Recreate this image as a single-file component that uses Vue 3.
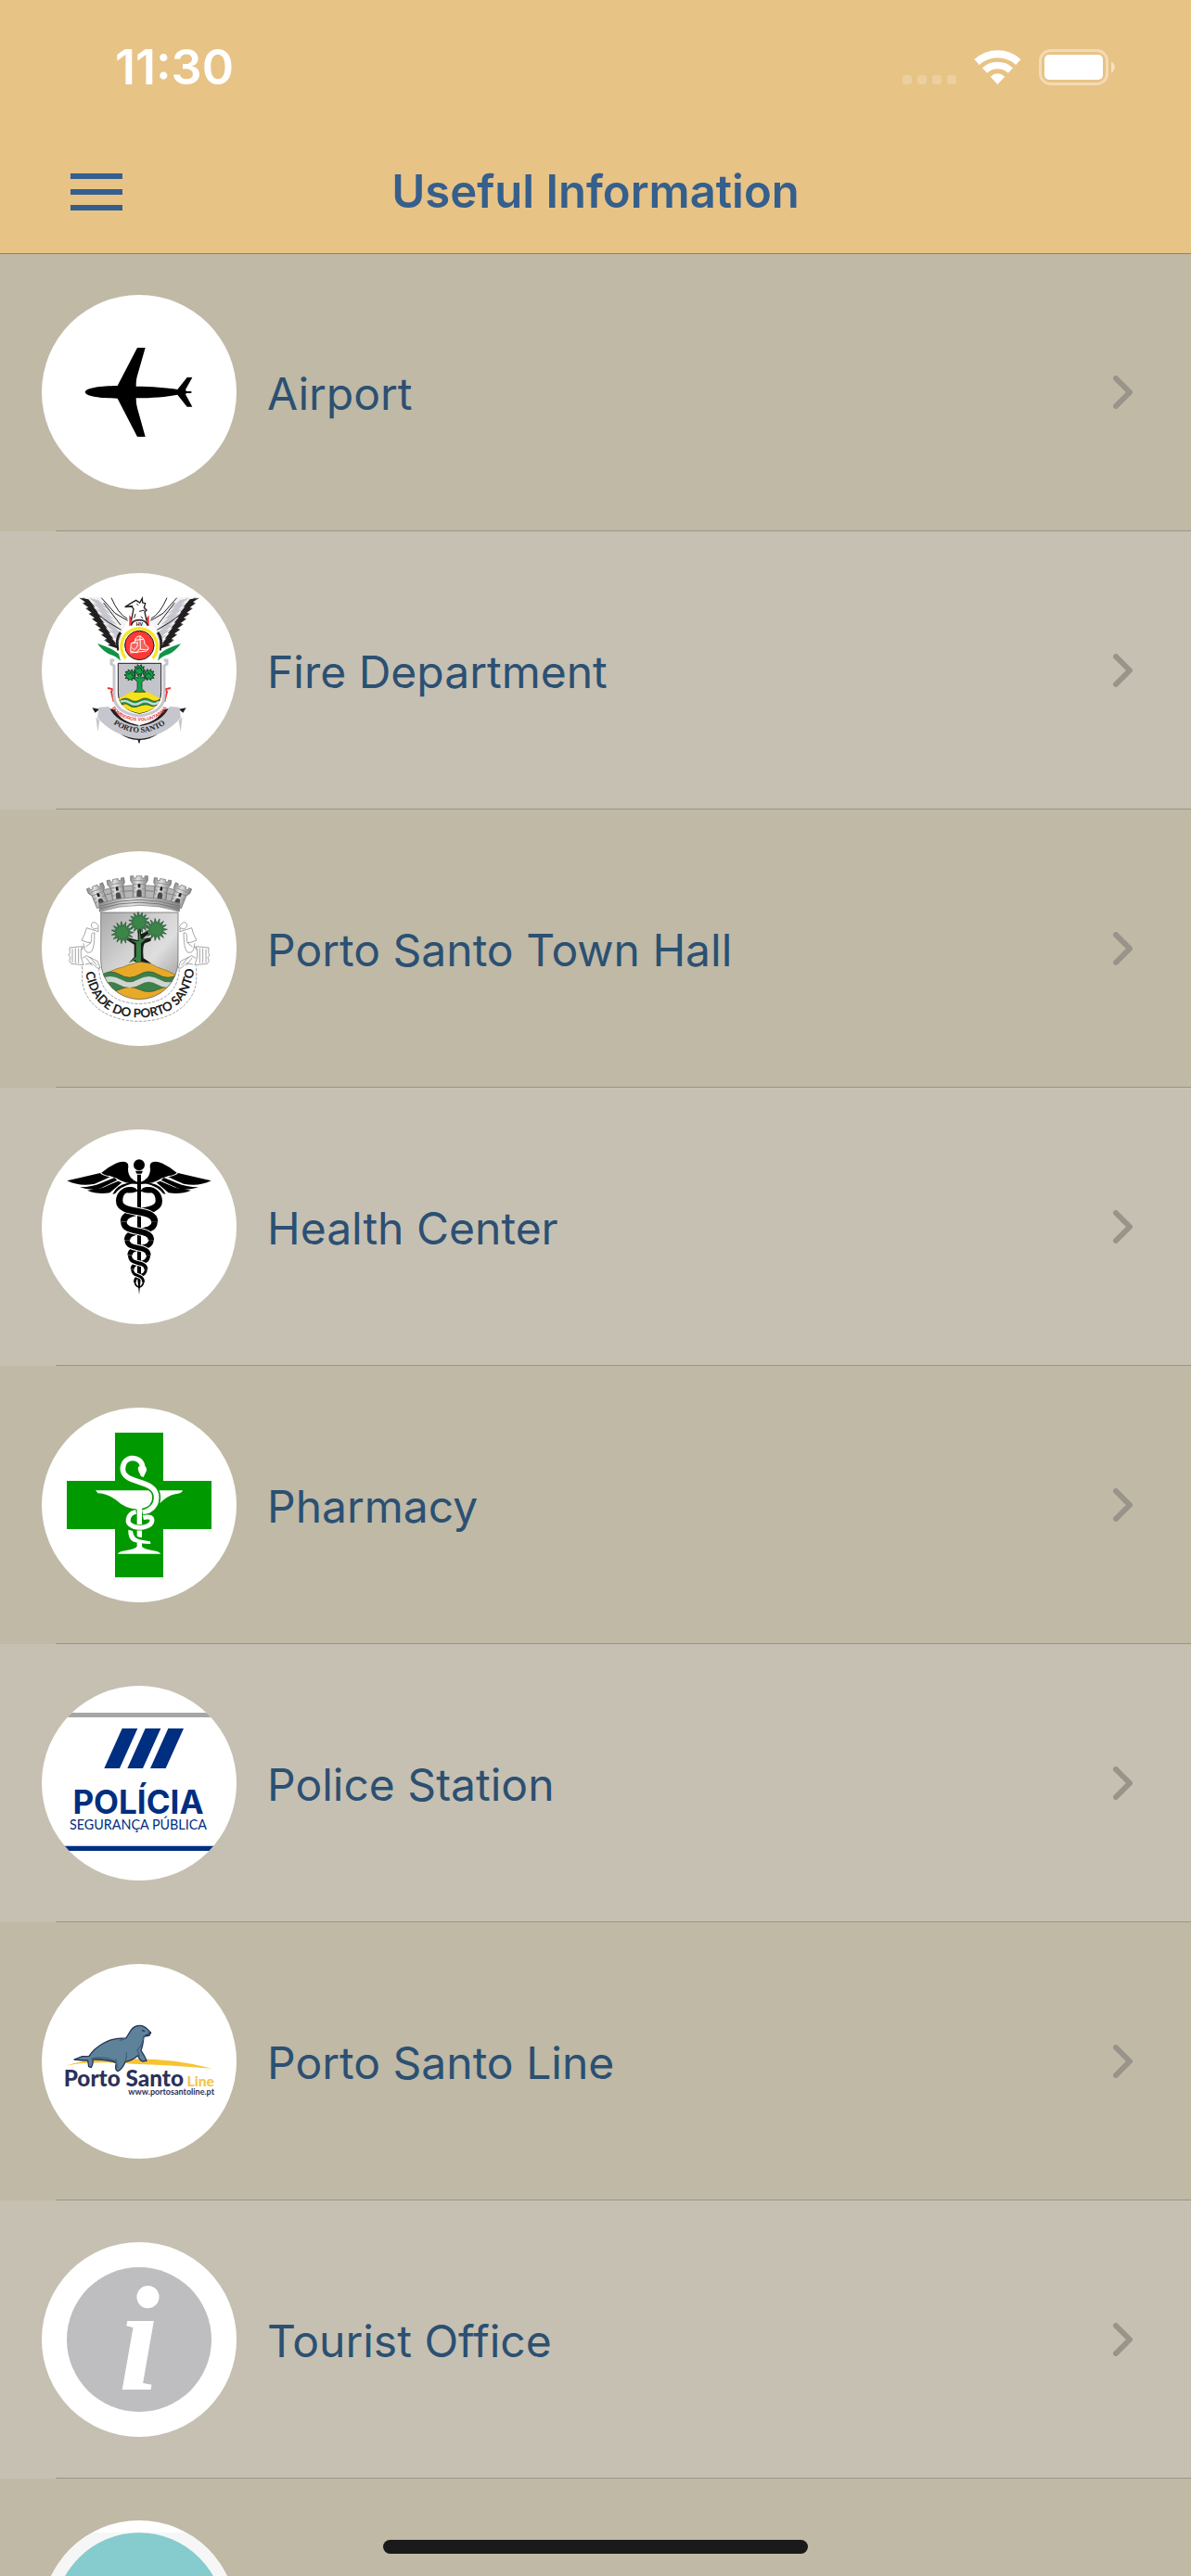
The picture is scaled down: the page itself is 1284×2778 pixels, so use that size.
<template>
    <div class="screen">
        <header class="header">
            <div class="status-bar">
                <span class="time">11:30</span>
                <div class="indicators">
                    <div class="signal">
                        <i v-for="n in 4" :key="n" class="signal-dot"></i>
                    </div>
                    <svg class="wifi" viewBox="0 0 151 112">
                        <path d="M7.8 39.4A99.5 99.5 0 0 1 143.2 39.4" fill="none" stroke="#fff" stroke-width="24"/>
                        <path d="M33.3 66.7A62 62 0 0 1 117.7 66.7" fill="none" stroke="#fff" stroke-width="23"/>
                        <path d="M75.5 112L52 87Q75.5 66 99 87Z" fill="#fff"/>
                    </svg>
                    <svg class="battery" viewBox="0 0 82 39">
                        <rect x="1.5" y="1.5" width="72" height="36" rx="11" fill="none" stroke="#fff" stroke-opacity="0.4" stroke-width="3"/>
                        <rect x="6" y="6" width="63" height="27" rx="5" fill="#fff"/>
                        <path d="M78 13.500C83 15.500 83 23.500 78 25.500Z" fill="#fff" fill-opacity="0.5"/>
                    </svg>
                </div>
            </div>
            <div class="nav-bar">
                <button type="button" class="menu-button" aria-label="Menu">
                    <span class="menu-line"></span>
                    <span class="menu-line"></span>
                    <span class="menu-line"></span>
                </button>
                <h1 class="title">Useful Information</h1>
            </div>
        </header>

        <ul class="list">
            <li v-for="item in items" :key="item.icon" class="row">
                <a href="#" class="row-link">
                    <svg class="avatar" viewBox="45 54 630 630" aria-hidden="true">
                        <!-- airplane -->
                        <g v-if="item.icon === 'airport'">
                            <path d="M185 369C188 354 235 349 290 348L354 225H380L354 316Q350 328 350 350C400 350 450 354 484 360L515 321H532L510 361L513 366H529V372H513L510 376L532 416H515L484 377C450 384 400 388 350 388Q350 408 354 420L380 513H354L290 389C235 388 188 383 185 369Z"/>
                        </g>

                        <!-- fire brigade crest -->
                        <g v-else-if="item.icon === 'fire'">
                            <g v-for="side in 2" :key="side" :transform="side === 2 ? 'translate(720 0) scale(-1 1)' : undefined">
                                <path d="M165 132H232L280 178L322 210L300 250L272 250L222 205Z" fill="#f3f3f5"/>
                                <path v-for="(f, i) in feathers" :key="'g' + i" :d="f.grey" fill="#c6c6ce"/>
                                <path v-for="(f, i) in feathers" :key="'b' + i" :d="f.black" fill="#231f20"/>
                                <path d="M238 134L282 184L323 208M180 134L232 192L262 214L302 238M270 134Q292 186 322 202M245 150L300 222" fill="none" stroke="#231f20" stroke-width="3"/>
                                <path d="M300 246C286 262 286 280 293 304" fill="none" stroke="#231f20" stroke-width="8"/>
                                <path d="M225 282C248 290 270 296 294 316L300 338Q284 322 262 316Q240 304 225 282Z" fill="#109347"/>
                                <path d="M328 190V226L338 218V202Z" fill="#ed3537"/>
                                <path d="M258 426L276 430L270 438L278 470" fill="none" stroke="#ed3537" stroke-width="6"/>
                                <path d="M208 490L232 494L218 506ZM262 492L282 496Q300 535 358 546V556Q285 544 262 492Z" fill="#231f20"/>
                                <path d="M230 488L262 486Q286 540 362 550V590Q280 584 225 522ZM220 520L232 532L226 568Z" fill="#c6c6ce"/>
                                <path d="M280 336H270V348L279 354V450C279 494 320 512 361 516" fill="none" stroke="#c6c6ce" stroke-width="9"/>
                                <path d="M300 575Q330 588 361 590L363 606L355 594Q325 592 300 575Z" fill="#231f20"/>
                            </g>
                            <path d="M335 206L342 170L336 162L314 164L338 149L350 142L362 150L370 136L371 150L380 152L376 166L384 174L378 180L384 208" fill="#fff" stroke="#231f20" stroke-width="4"/>
                            <path d="M318 163L340 160M352 154L358 158M360 178L378 174M348 186L344 200M366 194L372 202" fill="none" stroke="#231f20" stroke-width="3"/>
                            <path d="M334 224Q338 206 360 206T388 224" fill="#fff" stroke="#231f20" stroke-width="5"/>
                            <text x="361" y="225" text-anchor="middle" class="crest-text" font-size="16">HV</text>
                            <path d="M317 330A58 58 0 1 1 404 330" fill="none" stroke="#fff" stroke-width="17"/>
                            <path d="M317 330A58 58 0 1 1 404 330" fill="none" stroke="#f7e625" stroke-width="10"/>
                            <circle cx="361" cy="288" r="47" fill="#ff3935" stroke="#231f20" stroke-width="3"/>
                            <path d="M332 307L334 281L346 277C346 250 378 252 378 283L391 296L388 303L360 300L352 312Z" fill="#f2635a" stroke="#fff" stroke-width="3"/>
                            <path d="M337 281L355 278L354 292L344 302L337 296M347 271L374 268M363 256L364 300M331 312L385 306" fill="none" stroke="#fff" stroke-width="3"/>
                            <path d="M292 346H431V440C431 484 396 502 361 508C327 502 292 484 292 440Z" fill="#c3c3ca" stroke="#231f20" stroke-width="3"/>
                            <path d="M294 460C320 448 325 440 342 438H380C398 440 404 450 429 460C424 486 396 502 361 507C327 502 298 486 294 460Z" fill="#f7e119"/>
                            <path d="M298 466Q315 454 331 464T363 464T396 464T427 462L417 481Q406 488 394 482T361 484T328 482T305 480Z" fill="#16a04c" stroke="#231f20" stroke-width="2"/>
                            <path d="M300 470Q315 464 331 474T363 474T396 474T424 469" fill="none" stroke="#d5d5de" stroke-width="7"/>
                            <path d="M344 439L354 430V404L330 388L334 382L357 394V376H366V394L390 382L392 390L369 406V428L380 439Z" fill="#16a04c" stroke="#231f20" stroke-width="2"/>
                            <path v-for="(b, i) in crestBushes" :key="i" :d="b" fill="#169c4b" stroke="#123d22" stroke-width="3"/>
                            <path d="M352 364L364 360L370 372M322 382L334 376L340 388M382 384L392 376L398 386" fill="none" stroke="#123d22" stroke-width="3"/>
                            <path id="fire-arc" d="M262 462C276 556 446 556 460 462" fill="none"/>
                            <path id="fire-ribbon" d="M250 522Q361 618 472 522" fill="none"/>
                            <text class="crest-text" font-size="15" fill="#e5373a"><textPath href="#fire-arc" startOffset="50%" text-anchor="middle">BOMBEIROS VOLUNTARIOS</textPath></text>
                            <text class="crest-serif" font-size="25" fill="#231f20"><textPath href="#fire-ribbon" startOffset="50%" text-anchor="middle">PORTO SANTO</textPath></text>
                        </g>

                        <!-- town hall coat of arms -->
                        <g v-else-if="item.icon === 'town'">
                            <defs>
                                <linearGradient id="silver" x1="0" y1="0" x2="1" y2="1">
                                    <stop offset="0" stop-color="#a9a9a9"/>
                                    <stop offset="0.4" stop-color="#d2d2d2"/>
                                    <stop offset="0.6" stop-color="#dedede"/>
                                    <stop offset="1" stop-color="#8e8e8e"/>
                                </linearGradient>
                                <linearGradient id="stone" x1="0" y1="0" x2="1" y2="0">
                                    <stop offset="0" stop-color="#8d8d8d"/>
                                    <stop offset="0.4" stop-color="#e2e2e2"/>
                                    <stop offset="1" stop-color="#858585"/>
                                </linearGradient>
                                <clipPath id="town-shield">
                                    <path d="M236 252H486V408A125 125 0 0 1 236 408Z"/>
                                </clipPath>
                            </defs>
                            <path d="M222 184Q360 142 500 184L490 232Q360 198 232 232Z" fill="#b5b5b5" stroke="#777" stroke-width="2"/>
                            <path d="M228 200Q360 160 492 200M276 178V206M310 168V196M410 168V196M448 178V206M244 190V214M476 190V214" fill="none" stroke="#808080" stroke-width="3"/>
                            <g v-for="t in towers" :key="t.x" :transform="`translate(${t.x} ${t.y}) rotate(${t.angle})`">
                                <path d="M-28 0H-18V7H-9V0H9V7H18V0H28V15L20 27V70H-20V27L-28 15Z" fill="url(#stone)" stroke="#707070" stroke-width="2"/>
                                <path d="M-20 27H20M-20 39H-10M10 42H20M-20 52H-12M-18 15H18" stroke="#808080" stroke-width="2"/>
                                <path d="M-8 68V52A8 8 0 0 1 8 52V68Z" fill="#4a4a4a"/>
                                <path d="M-4 38V29A4 4 0 0 1 4 29V38Z" fill="#222"/>
                            </g>
                            <path d="M230 223Q360 182 492 223L490 249Q360 208 232 250Z" fill="url(#stone)" stroke="#777" stroke-width="2"/>
                            <path d="M231 232Q360 190 491 232M231 240Q360 199 491 240" fill="none" stroke="#777" stroke-width="3"/>
                            <g clip-path="url(#town-shield)">
                                <path d="M236 252H486V535H236Z" fill="url(#silver)"/>
                                <path d="M236 458Q285 432 305 430Q325 420 342 418L360 412L388 416Q405 420 416 428Q450 438 486 458V535H236Z" fill="#e9a928" stroke="#8b661b" stroke-width="2"/>
                                <path d="M236 456Q267 434 298 453T360 453T422 453T486 453V502Q453 486 422 501T360 501T298 501T236 501Z" fill="#3d8049" stroke="#315438" stroke-width="2"/>
                                <path d="M236 477Q267 458 298 477T360 477T422 477T486 477" fill="none" stroke="#d2d4d2" stroke-width="17"/>
                            </g>
                            <path d="M236 252H486V408A125 125 0 0 1 236 408Z" fill="none" stroke="#555" stroke-width="2"/>
                            <path d="M328 414L344 396V356L318 340L325 334L356 342V306H366V322L388 312L392 320L372 336L398 334V344L378 352Q370 362 374 400L400 417L366 412L352 414L340 408Z" fill="#171d18"/>
                            <path d="M326 416L350 395V350L330 341L358 346L361 306L366 338L384 336L366 352V412L352 414L348 405Z" fill="#397f48"/>
                            <path v-for="(b, i) in townBushes" :key="i" :d="b" fill="#3c8449" stroke="#1e4c2a" stroke-width="2"/>
                            <g v-for="side in 2" :key="side" :transform="side === 2 ? 'translate(720 0) scale(-1 1)' : undefined" fill="#fff" stroke="#777" stroke-width="2">
                                <path d="M230 300C222 278 202 280 206 298L214 306L228 302V314L190 302L184 322L174 342L190 348L204 350M180 352C184 372 184 385 203 381C217 370 215 328 216 318C204 316 206 326 206 340C204 358 192 355 188 364"/>
                                <path d="M135 366L176 362L172 374V396L180 422L140 418L134 408L138 398L132 390L136 382ZM144 370V414M154 368V416M164 368V416M182 360L174 374"/>
                                <path d="M176 400L190 392L226 410L234 432H224L208 416L186 420M188 398L208 424M200 396L224 424"/>
                            </g>
                            <path d="M176 426V474C184 550 260 604 360 604C460 604 538 550 545 474V426" fill="none" stroke="#777" stroke-width="2" stroke-dasharray="10 4"/>
                            <path d="M230 432Q234 542 360 548Q486 542 490 432" fill="none" stroke="#777" stroke-width="2" stroke-dasharray="10 4"/>
                            <path id="town-arc" d="M185 440C202 552 275 592 361 592C450 592 526 548 539 430" fill="none"/>
                            <text class="town-text" font-size="40"><textPath href="#town-arc" startOffset="50%" text-anchor="middle">CIDADE DO PORTO SANTO</textPath></text>
                        </g>

                        <!-- caduceus -->
                        <g v-else-if="item.icon === 'health'">
                            <path d="M354 200H366V530L360 588L354 530Z"/>
                            <circle cx="360" cy="169" r="18"/>
                            <path d="M348 188H372L368 197H352Z"/>
                            <g v-for="side in 2" :key="side" :transform="side === 2 ? 'translate(720 0) scale(-1 1)' : undefined">
                                <path d="M127 220L234 195Q242 204 266 208Q242 219 216 230Q168 240 127 220Z"/>
                                <path d="M168 241Q210 240 236 228L280 210L289 218Q244 240 224 249Q198 251 168 241Z"/>
                                <path d="M192 251Q236 248 260 235L292 221L304 226L265 259Q225 265 192 251Z"/>
                                <path d="M274 263Q288 234 321 228L340 229Q300 238 282 262Z"/>
                                <path d="M238 194Q262 174 284 164Q308 154 321 162Q327 167 324 182Q324 214 358 226V231Q310 229 288 212L264 204Q247 203 238 194Z"/>
                                <path d="M285 286C285 254 313 235 339 241Q352 243 355 254Q332 262 321 259Q307 262 307 286Z"/>
                            </g>
                            <template v-for="(c, i) in coils" :key="i">
                                <path :d="c.back" fill="none" stroke="#000" :stroke-width="c.width"/>
                                <path :d="c.front" fill="none" stroke="#fff" :stroke-width="c.width + 6"/>
                                <path :d="c.front" fill="none" stroke="#000" :stroke-width="c.width"/>
                            </template>
                            <path d="M346 547Q347 560 360 565Q373 560 374 547" fill="none" stroke="#000" stroke-width="5"/>
                        </g>

                        <!-- pharmacy cross with bowl of Hygieia -->
                        <g v-else-if="item.icon === 'pharmacy'">
                            <path d="M282 135H438V291H594V447H438V603H282V447H126V291H282Z" fill="#009a00"/>
                            <path d="M219 322H501Q498 332 476 334Q451 340 428 362Q407 381 369 383V503Q374 511 399 515Q425 518 430 527H290Q295 518 322 515Q348 511 353 503V383Q316 382 284 352Q257 332 227 331Z" fill="#fff"/>
                            <g fill="none">
                                <path d="M333 448Q332 476 361 482Q385 486 398 491" stroke="#009a00" stroke-width="17"/>
                                <path d="M370 244C365 206 309 208 307 252C307 308 416 281 416 344C416 368 401 388 371 394" stroke="#009a00" stroke-width="27"/>
                                <path d="M371 244C365 208 309 207 307 252C307 304 416 284 416 344C416 368 401 386 371 394" stroke="#fff" stroke-width="17"/>
                                <path d="M350 391C324 396 320 421 329 431C351 450 401 442 402 419C402 407 388 406 373 410" stroke="#009a00" stroke-width="20"/>
                                <path d="M350 391C324 396 320 421 329 431C351 450 401 442 402 419C402 407 388 406 373 410" stroke="#fff" stroke-width="15"/>
                            </g>
                            <path d="M359 244L376 240Q385 246 384 258L374 279L366 276Q357 262 356 250Z" fill="#fff"/>
                            <path d="M325 449Q323 478 342 488Q360 493 397 495L396 487L368 482Q342 480 339 453Z" fill="#fff"/>
                        </g>

                        <!-- police badge -->
                        <g v-else-if="item.icon === 'police'">
                            <path d="M45 141H675V156H45Z" fill="#a6a6a6"/>
                            <path d="M45 572H675V588H45Z" fill="#002e80"/>
                            <path d="M305 192H355L297 321H247ZM380 192H430L372 321H322ZM454 192H504L446 321H396Z" fill="#002e80"/>
                            <text x="357" y="467" text-anchor="middle" class="police-name" font-size="105">POLÍCIA</text>
                            <text x="357" y="519" text-anchor="middle" class="police-sub" font-size="43">SEGURANÇA PÚBLICA</text>
                        </g>

                        <!-- ferry line logo -->
                        <g v-else-if="item.icon === 'ferry'">
                            <path d="M122 383Q200 358 310 362Q450 355 596 392Q450 380 340 377Q200 366 122 383Z" fill="#f7c331"/>
                            <path d="M150 363L176 353L198 352C220 318 262 298 290 295L317 294C329 280 334 253 362 253C381 253 386 266 398 276L393 285L375 289C373 310 370 323 366 334Q377 349 384 367L371 369Q361 365 356 350Q338 366 315 371Q305 394 291 401Q280 397 286 374Q260 362 211 363Q211 380 205 389L197 386L194 366L178 366Z" fill="#5f829b" stroke="#263558" stroke-width="4" stroke-linejoin="round"/>
                            <path d="M204 361Q245 350 286 370M318 294L296 302M375 285Q372 315 354 332L362 352M284 361L290 390M319 340Q320 360 315 370" fill="none" stroke="#41627d" stroke-width="4"/>
                            <path d="M369 268L378 272M389 277L398 278M380 284L393 283" fill="none" stroke="#263558" stroke-width="4"/>
                            <text x="116" y="449" class="ferry-name" font-size="73">Porto Santo</text>
                            <text x="603" y="449" text-anchor="end" class="ferry-line" font-size="47">Line</text>
                            <text x="603" y="478" text-anchor="end" class="ferry-url" font-size="27">www.portosantoline.pt</text>
                        </g>

                        <!-- tourist information -->
                        <g v-else-if="item.icon === 'tourist'">
                            <circle cx="360" cy="369" r="234" fill="#bebec0"/>
                            <text x="360" y="532" text-anchor="middle" class="info-mark" font-size="480">i</text>
                        </g>

                        <g v-else>
                            <path d="M45 93H675V684H45Z" fill="#f6f6f6"/>
                            <circle cx="360" cy="369" r="275" fill="#86cbcd"/>
                        </g>
                    </svg>
                    <span class="label">{{ item.label }}</span>
                    <svg class="chevron" viewBox="0 0 21 36">
                        <path d="M3 3L18 18L3 33" fill="none" stroke="#99948a" stroke-width="6" stroke-linecap="round" stroke-linejoin="round"/>
                    </svg>
                </a>
            </li>
        </ul>

        <div class="home-indicator"></div>
    </div>
</template>

<script setup>
const items = [
    { icon: 'airport', label: 'Airport' },
    { icon: 'fire', label: 'Fire Department' },
    { icon: 'town', label: 'Porto Santo Town Hall' },
    { icon: 'health', label: 'Health Center' },
    { icon: 'pharmacy', label: 'Pharmacy' },
    { icon: 'police', label: 'Police Station' },
    { icon: 'ferry', label: 'Porto Santo Line' },
    { icon: 'tourist', label: 'Tourist Office' },
    { icon: 'more', label: '' }
]

// spiky round crown of a dragon tree
function bush(cx, cy, inner, outer, spikes) {
    const points = []
    for (let i = 0; i < spikes * 2; i++) {
        const r = i % 2 ? inner : outer
        const a = (Math.PI * i) / spikes
        points.push(`${(cx + r * Math.cos(a)).toFixed(1)} ${(cy + r * Math.sin(a)).toFixed(1)}`)
    }
    return `M${points.join('L')}Z`
}

const crestBushes = [bush(361, 368, 12, 19, 10), bush(331, 384, 12, 19, 10), bush(392, 383, 12, 19, 10)]
const townBushes = [bush(360, 284, 20, 34, 15), bush(306, 317, 20, 36, 15), bush(415, 307, 20, 36, 15)]

const towers = [
    { x: 216, y: 166, angle: -22 },
    { x: 283, y: 144, angle: -10 },
    { x: 360, y: 134, angle: 0 },
    { x: 437, y: 144, angle: 10 },
    { x: 504, y: 166, angle: 22 }
]

// wing feathers, from the top edge down to the body
const feathers = Array.from({ length: 9 }, (_, i) => {
    const x = 166 + i * 10
    const y = 134 + i * 17
    return {
        black: `M${x} ${y}L${x + 30} ${y + 5}L${x + 52} ${y + 31}L${x + 30} ${y + 23}L${x + 12} ${y + 17}L${x + 20} ${y + 14}Z`,
        grey: `M${x + 32} ${y}L${x + 62} ${y + 8}L${x + 94} ${y + 36}L${x + 60} ${y + 23}Z`
    }
})

// left/right extremes of each snake loop and the height where they cross
const loops = [
    { l: 296, r: 424, y: 285, cross: 319, width: 22 },
    { l: 310, r: 410, y: 353, cross: 383, width: 19 },
    { l: 321, r: 399, y: 412, cross: 437, width: 16 },
    { l: 330, r: 390, y: 461, cross: 487, width: 12 },
    { l: 338, r: 382, y: 506, cross: 527, width: 9 },
    { l: 346, r: 374, y: 548 }
]

const coils = loops.slice(0, -1).map((a, i) => {
    const b = loops[i + 1]
    const bend = Math.round((a.cross - a.y) * 0.4)
    return {
        width: a.width,
        back: `M${a.r} ${a.y}C${a.r} ${a.cross + bend} ${b.l} ${a.cross - bend} ${b.l} ${b.y}`,
        front: `M${a.l} ${a.y}C${a.l} ${a.cross + bend} ${b.r} ${a.cross - bend} ${b.r} ${b.y}`
    }
})
</script>

<style>
body {
    margin: 0;
    background: #bfb9a6;
}
</style>

<style scoped>
.screen {
    display: flex;
    flex-direction: column;
    height: 100vh;
    overflow: hidden;
    font-family: Inter, "Liberation Sans", sans-serif;
}
.header {
    position: relative;
    z-index: 1;
    flex: none;
    background: #e8c386;
    box-shadow: 0 1px 0 #8b826f;
}
.status-bar {
    box-sizing: border-box;
    display: flex;
    align-items: center;
    justify-content: space-between;
    height: 141px;
    padding: 4px 82px 0 124px;
}
.time {
    color: #fff;
    font-size: 52px;
    line-height: 60px;
    font-weight: 600;
}
.indicators {
    display: flex;
    align-items: center;
    gap: 19px;
}
.signal {
    display: flex;
    align-items: flex-end;
    gap: 6px;
    height: 37px;
}
.signal-dot {
    width: 10px;
    height: 10px;
    border-radius: 3px;
    background: rgba(255, 255, 255, 0.2);
}
.wifi {
    width: 51px;
    height: 37px;
}
.battery {
    width: 82px;
    height: 39px;
}
.nav-bar {
    display: grid;
    grid-template-columns: 1fr auto 1fr;
    align-items: center;
    height: 132px;
    padding: 0 76px;
}
.menu-button {
    display: flex;
    flex-direction: column;
    gap: 11px;
    width: 56px;
    padding: 0;
    border: 0;
    background: none;
}
.menu-line {
    height: 6px;
    background: #355f8c;
}
.title {
    margin: 0;
    color: #355f8c;
    font-size: 49px;
    line-height: 60px;
    font-weight: 600;
}
.list {
    flex: 1;
    min-height: 0;
    margin: 0;
    padding: 0;
    overflow: hidden;
    list-style: none;
}
.row {
    position: relative;
    background: #c6c0b2;
}
.row:nth-child(odd) {
    background: #bfb9a6;
}
.row::after {
    content: "";
    position: absolute;
    left: 60px;
    right: 0;
    bottom: 0;
    height: 1px;
    background: #99958a;
}
.row-link {
    display: flex;
    align-items: center;
    padding: 45px 63px 45px 45px;
    color: #2c5072;
    text-decoration: none;
}
.avatar {
    flex: none;
    width: 210px;
    height: 210px;
    border-radius: 50%;
    background: #fff;
}
.label {
    flex: 1;
    margin-left: 33px;
    padding-top: 4px;
    font-size: 48px;
    line-height: 60px;
}
.chevron {
    flex: none;
    width: 21px;
    height: 36px;
}
.crest-text {
    font-family: "Liberation Sans", sans-serif;
    font-weight: 700;
}
.crest-serif {
    font-family: "Liberation Serif", serif;
    font-weight: 700;
}
.town-text {
    font-family: Lato, sans-serif;
    font-weight: 700;
    fill: #1a1a1a;
}
.police-name {
    font-family: Inter, sans-serif;
    font-weight: 700;
    fill: #002e80;
}
.police-sub {
    font-family: Lato, sans-serif;
    fill: #002e80;
}
.ferry-name {
    font-family: Lato, sans-serif;
    font-weight: 900;
    fill: #2b3159;
}
.ferry-line {
    font-family: Lato, sans-serif;
    font-weight: 900;
    fill: #f3c64a;
}
.ferry-url {
    font-family: Lato, sans-serif;
    font-weight: 700;
    fill: #2b3159;
}
.info-mark {
    font-family: "Liberation Serif", serif;
    font-style: italic;
    font-weight: 700;
    fill: #fff;
}
.home-indicator {
    position: fixed;
    left: 50%;
    bottom: 24px;
    width: 458px;
    height: 15px;
    border-radius: 8px;
    background: #1a1a1a;
    transform: translateX(-50%);
}
</style>
